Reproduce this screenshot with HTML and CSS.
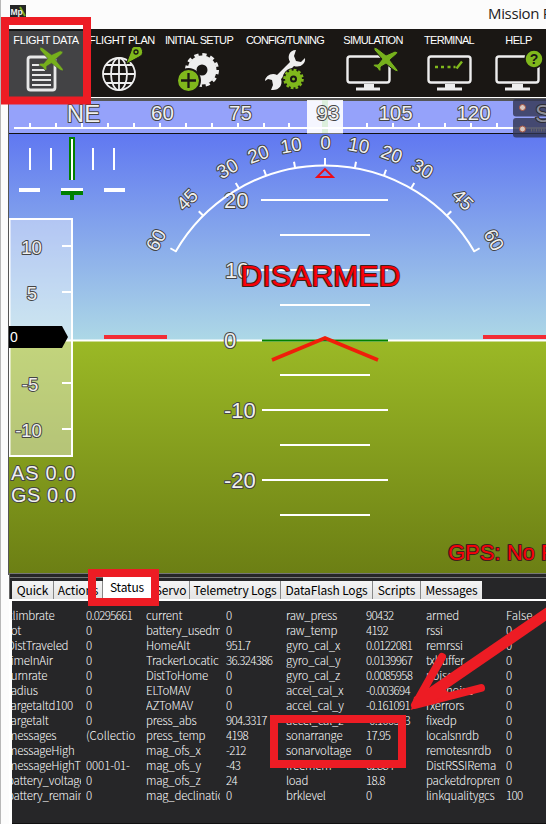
FILE: index.html
```html
<!DOCTYPE html>
<html lang="en">
<head>
<meta charset="utf-8">
<title>Mission Planner</title>
<link rel="stylesheet" href="styles.css">
</head>
<body>
<svg class="defs" width="0" height="0">
  <symbol id="plane" viewBox="0 0 26 26" overflow="visible">
    <path d="M1 0 L4 1 L13 8 L22 4 L25 5 L24 7 L17 13 L25 23 L25 25 L22 24 L13 17 L8 20 L8 24 L6 24 L4 21 L0 19 L1 17 L5 17 L9 12 L1 3 Z"/>
  </symbol>
</svg>
<div class="window">
  <header class="titlebar">
    <svg class="app-icon" width="16" height="13" viewBox="0 0 16 13"><rect width="16" height="13" fill="#262626"/><path d="M10 2l5 9" stroke="#78a81f" stroke-width="2"/><text x="0.500" y="10" class="mp">Mp</text></svg>
    <h1>Mission Planner</h1>
  </header>
  <nav class="toolbar">
    <a class="tool active w-data"><span>FLIGHT DATA</span>
      <svg width="74" height="50" viewBox="9 47 74 50">
        <rect x="28" y="57" width="27" height="33" rx="2.500" fill="none" stroke="#e8e8e8" stroke-width="2.800"/>
        <path d="M32 65h8M32 70h13M32 75h19M32 80h19M32 85h19" stroke="#e8e8e8" stroke-width="2"/>
        <use href="#plane" x="39" y="47" width="25" height="25" fill="#76b01c" stroke="#444" stroke-width=".6"/>
      </svg></a>
    <a class="tool w-plan"><span>FLIGHT PLAN</span>
      <svg width="78" height="50" viewBox="83 47 78 50">
        <g fill="none" stroke="#eee" stroke-width="1.800"><circle cx="119" cy="74" r="16"/><ellipse cx="119" cy="74" rx="8" ry="16"/><path d="M119 58v32M103 74h32M106 65h26M106 83h26"/></g>
        <path d="M126 64 L131 51 A5.800 5.800 0 1 1 139 57 Z" fill="#80b81c" stroke="#1a1714"/><circle cx="136" cy="52" r="2" fill="#80b81c" stroke="#1a1714" stroke-width="1.300"/>
      </svg></a>
    <a class="tool w-setup"><span>INITIAL SETUP</span>
      <svg width="76" height="50" viewBox="161 47 76 50">
        <circle cx="202" cy="70" r="10" fill="none" stroke="#eee" stroke-width="9"/><circle cx="202" cy="70" r="15.500" fill="none" stroke="#eee" stroke-width="3" stroke-dasharray="4.300 3.800"/>
        <circle cx="188.500" cy="80.500" r="11.500" fill="#80b81c" stroke="#1a1714" stroke-width="2"/><path d="M181 80.500h15M188.500 73v15" stroke="#1a1714" stroke-width="2.300"/>
      </svg></a>
    <a class="tool w-config"><span>CONFIG/TUNING</span>
      <svg width="96" height="50" viewBox="237 47 96 50">
        <path d="M296 50 C289 50 287 57 290 62 L277 75 C272 72 265 76 265 81 L268 79 L272 80 L273 85 L271 90 C279 91 283 85 281 79 L294 66 C300 68 306 64 305 58 L301 62 L296 61 L294 56 Z" fill="#eee"/>
        <circle cx="293.500" cy="79" r="11" fill="#1a1714"/><circle cx="293.500" cy="79" r="6" fill="none" stroke="#80b81c" stroke-width="5"/><circle cx="293.500" cy="79" r="9" fill="none" stroke="#80b81c" stroke-width="2.500" stroke-dasharray="2.700 2"/><circle cx="293.500" cy="79" r="1.500" fill="#80b81c"/>
      </svg></a>
    <a class="tool w-sim"><span>SIMULATION</span>
      <svg width="80" height="50" viewBox="333 47 80 50">
        <rect x="347.500" y="56.500" width="42" height="26" rx="2.500" fill="none" stroke="#eee" stroke-width="2.400"/><path d="M364 84h10v3.500h6v3h-24v-3h8z" fill="#eee"/>
        <use href="#plane" x="373" y="47" width="26" height="26" fill="#76b01c" stroke="#1a1714" stroke-width="1"/>
      </svg></a>
    <a class="tool w-term"><span>TERMINAL</span>
      <svg width="72" height="50" viewBox="413 47 72 50">
        <rect x="428.500" y="56.500" width="42" height="26" rx="2.500" fill="none" stroke="#eee" stroke-width="2.400"/><path d="M445 84h10v3.500h7v3h-25v-3h8z" fill="#eee"/>
        <path d="M435 67h3M441 67h3M447.500 67h3M453.500 67h2M456.500 68.500l5.500-7" stroke="#80b81c" stroke-width="2.400"/>
      </svg></a>
    <a class="tool w-help"><span>HELP</span>
      <svg width="61" height="50" viewBox="485 47 61 50">
        <rect x="496.500" y="56.500" width="42" height="26" rx="2.500" fill="none" stroke="#eee" stroke-width="2.400"/><path d="M512 84h11v3.500h7v3h-25v-3h7z" fill="#eee"/>
        <circle cx="534" cy="59" r="9" fill="#80b81c" stroke="#1a1714" stroke-width="1.500"/><text x="534" y="64" class="qmark">?</text>
      </svg></a>
  </nav>
  <svg class="hud" width="537" height="475" viewBox="9 99 537 475">
    <defs>
      <linearGradient id="sky" x1="0" y1="0" x2="0" y2="1"><stop offset="0" stop-color="#6078f1"/><stop offset="1" stop-color="#add8e6"/></linearGradient>
      <linearGradient id="ground" x1="0" y1="0" x2="0" y2="1"><stop offset="0" stop-color="#9bb926"/><stop offset="1" stop-color="#6c7f14"/></linearGradient>
    </defs>
    <rect x="9" y="134" width="537" height="206" fill="url(#sky)"/>
    <rect x="9" y="340" width="537" height="233" fill="url(#ground)"/>
    <path d="M9 340.500H546" stroke="#fff" stroke-width="2"/>

    <rect x="9" y="99" width="537" height="34" fill="#95a2fa"/>
    <path d="M9 100H546" stroke="#555" stroke-width="2"/>
    <rect x="307" y="100" width="36" height="33" fill="#fff" opacity=".9"/>
    <rect x="322" y="100" width="6" height="33" fill="#dcefdc"/>
    <path d="M14 128H546" stroke="#fff" stroke-width="2"/>
    <path d="M30 123v5M56 123v5M82 123v5M108 123v5M134 123v5M160 123v5M186 123v5M212 123v5M238 123v5M264 123v5M289 123v5M367 123v5M393 123v5M419 123v5M445 123v5M471 123v5M497 123v5" stroke="#fff" stroke-width="2"/>
    <path d="M9 133.500H307M343 133.500H546" stroke="#111" stroke-width="1.200"/>
    <g class="num mid s21">
      <text x="83.500" y="122" class="s24">NE</text><text x="162.500" y="120">60</text><text x="240.500" y="120">75</text><text x="328" y="120">93</text><text x="395.500" y="120">105</text><text x="473.500" y="120">120</text>
    </g>
    <g class="chip"><rect x="513" y="99" width="40" height="17.500" rx="3"/><rect x="513" y="118" width="40" height="19.500" rx="3"/></g>
    <text x="543" y="122" class="heading-dim">S</text>
    <g fill="#d8c8c0" stroke="#a6523e"><circle cx="522.500" cy="107.500" r="3"/><circle cx="522.500" cy="129" r="3"/></g>
    <path d="M531 130h15" stroke="#666" stroke-width="3" stroke-dasharray="1 1.500"/>

    <path d="M30 148v22M51 148v22M93 148v22M114 148v22" stroke="#fff" stroke-width="2"/>
    <path d="M72 137v43" stroke="#008000" stroke-width="6"/><path d="M72 139v41" stroke="#fff" stroke-width="2"/>
    <path d="M72 193v7" stroke="#008000" stroke-width="4"/>
    <path d="M19 190h21M61 190h22M104 190h21" stroke="#fff" stroke-width="4"/><path d="M61 193h22" stroke="#008000" stroke-width="4"/>

    <rect x="9" y="219" width="63" height="237" fill="#fff" opacity=".4"/>
    <path d="M9.500 219H72V456H9.500Z" fill="none" stroke="#fff" stroke-width="2"/>
    <path d="M62 246h10M62 292h10M62 383h10M62 429h10" stroke="#fff" stroke-width="2"/>
    <g class="num mid s18"><text x="31.500" y="254">10</text><text x="32" y="300">5</text><text x="30" y="391">-5</text><text x="28.500" y="437">-10</text></g>
    <path d="M9 326H62L68 337L62 348H9Z" fill="#000"/><text x="10" y="342" class="speed">0</text>
    <g class="num s20"><text x="11" y="480" textLength="64">AS 0.0</text><text x="11" y="502" textLength="65">GS 0.0</text></g>

    <g stroke="#fff" stroke-width="2"><path d="M261 200H388M280 235H370M261 270H388M280 305H370M280 375H370M262 410H388M280 445H370M262 480H388M280 515H370"/></g>
    <path d="M262 340.500H388" stroke="#008000" stroke-width="2"/>
    <path d="M104 337H167M483 337H546" stroke="#f22d35" stroke-width="4"/>
    <path d="M272 360L325 338L378 360" fill="none" stroke="#f01e0a" stroke-width="3.600"/>
    <g class="num s22"><text x="224" y="208">20</text><text x="225" y="278">10</text><text x="224" y="348">0</text><text x="224" y="418">-10</text><text x="224" y="488">-20</text></g>

    <path d="M175.700 251.500A172.500 172.500 0 0 1 474.300 251.500" fill="none" stroke="#fff" stroke-width="2"/>
    <g stroke="#fff" stroke-width="2">
      <path d="M325 165v-7"/><path d="M325 165v-6" transform="rotate(10 325 337.500)"/><path d="M325 165v-6" transform="rotate(20 325 337.500)"/><path d="M325 165v-6" transform="rotate(30 325 337.500)"/><path d="M325 165v-6" transform="rotate(45 325 337.500)"/><path d="M325 166v-7" transform="rotate(60 325 337.500)"/>
      <path d="M325 165v-6" transform="rotate(-10 325 337.500)"/><path d="M325 165v-6" transform="rotate(-20 325 337.500)"/><path d="M325 165v-6" transform="rotate(-30 325 337.500)"/><path d="M325 165v-6" transform="rotate(-45 325 337.500)"/><path d="M325 166v-7" transform="rotate(-60 325 337.500)"/>
    </g>
    <g class="num mid s19">
      <text x="325.500" y="149">0</text>
      <text x="325" y="149" transform="rotate(10 325 337.500)">10</text><text x="325" y="149" transform="rotate(20 325 337.500)">20</text><text x="325" y="149" transform="rotate(30 325 337.500)">30</text><text x="325" y="149" transform="rotate(45 325 337.500)">45</text><text x="325" y="149" transform="rotate(60 325 337.500)">60</text>
      <text x="325" y="149" transform="rotate(-10 325 337.500)">10</text><text x="325" y="149" transform="rotate(-20 325 337.500)">20</text><text x="325" y="149" transform="rotate(-30 325 337.500)">30</text><text x="325" y="149" transform="rotate(-45 325 337.500)">45</text><text x="325" y="149" transform="rotate(-60 325 337.500)">60</text>
    </g>
    <path d="M325 169L317 177H333Z" fill="none" stroke="#f00a14" stroke-width="1.800"/>
    <text x="240.500" y="286" class="warn s30" textLength="160">DISARMED</text>
    <text x="448" y="560" class="warn s22">GPS: No Fix</text>
  </svg>
  <div class="tabs">
    <span class="tab t1">Quick</span><span class="tab t2">Actions</span><span class="tab t3 selected">Status</span><span class="tab t4">Servo</span><span class="tab t5">Telemetry Logs</span><span class="tab t6">DataFlash Logs</span><span class="tab t7">Scripts</span><span class="tab t8">Messages</span>
  </div>
  <main class="status">
    <div class="names first"><b>climbrate</b><b>rot</b><b>DistTraveled</b><b>timeInAir</b><b>turnrate</b><b>radius</b><b>targetaltd100</b><b>targetalt</b><b>messages</b><b>messageHigh</b><b>messageHighT</b><b>battery_voltage</b><b>battery_remain</b></div>
    <div class="values"><b>0.0295661</b><b>0</b><b>0</b><b>0</b><b>0</b><b>0</b><b>0</b><b>0</b><b class="words">(Collectio</b><b></b><b class="date">0001-01-</b><b>0</b><b>0</b></div>
    <div class="names"><b>current</b><b>battery_usedm</b><b>HomeAlt</b><b>TrackerLocatic</b><b>DistToHome</b><b>ELToMAV</b><b>AZToMAV</b><b>press_abs</b><b>press_temp</b><b>mag_ofs_x</b><b>mag_ofs_y</b><b>mag_ofs_z</b><b>mag_declinatio</b></div>
    <div class="values"><b>0</b><b>0</b><b>951.7</b><b>36.324386</b><b>0</b><b>0</b><b>0</b><b>904.3317</b><b>4198</b><b>-212</b><b>-43</b><b>24</b><b>0</b></div>
    <div class="names"><b>raw_press</b><b>raw_temp</b><b>gyro_cal_x</b><b>gyro_cal_y</b><b>gyro_cal_z</b><b>accel_cal_x</b><b>accel_cal_y</b><b>accel_cal_z</b><b>sonarrange</b><b>sonarvoltage</b><b>freemem</b><b>load</b><b>brklevel</b></div>
    <div class="values"><b>90432</b><b>4192</b><b>0.0122081</b><b>0.0139967</b><b>0.0085958</b><b>-0.003694</b><b>-0.161091</b><b>-0.100393</b><b>17.95</b><b>0</b><b>62884</b><b>18.8</b><b>0</b></div>
    <div class="names"><b>armed</b><b>rssi</b><b>remrssi</b><b>txbuffer</b><b>noise</b><b>remnoise</b><b>rxerrors</b><b>fixedp</b><b>localsnrdb</b><b>remotesnrdb</b><b>DistRSSIRema</b><b>packetdroprem</b><b>linkqualitygcs</b></div>
    <div class="values last"><b class="words">False</b><b>0</b><b>0</b><b>0</b><b>0</b><b>0</b><b>0</b><b>0</b><b>0</b><b>0</b><b>0</b><b>0</b><b>100</b></div>
  </main>
</div>
<svg class="marks" width="546" height="824" viewBox="0 0 546 824">
  <g fill="none" stroke="#ed1c24">
    <path d="M5 21H87V100.500H5Z" stroke-width="8"/>
    <path d="M92 573H155V602H92Z" stroke-width="8"/>
    <path d="M274 719H402V764H274Z" stroke-width="8"/>
    <path d="M418 702L552 610" stroke-width="11"/>
    <path d="M442 657L415 705L481 688" stroke-width="8" stroke-linecap="round" stroke-linejoin="round"/>
  </g>
  <path d="M411 710L414 697L440 684L450 694Z" fill="#ed1c24"/>
</svg>
</body>
</html>
```
FILE: styles.css
```css
* { box-sizing: border-box; }
body { margin: 0; width: 546px; height: 824px; overflow: hidden; position: relative; background: #fcfcfc; font-family: "Liberation Sans", sans-serif; }
.defs { position: absolute; }
.window { height: 824px; border-left: 1px solid #b8b8b8; padding-left: 8px; display: flex; flex-direction: column; overflow: hidden; }

.titlebar { height: 29px; flex: none; display: flex; justify-content: space-between; align-items: flex-start; padding: 5px 0 0 1px; }
.titlebar h1 { margin: -3px 0 0; width: 58px; font: 15px/22px "Open Sans", sans-serif; letter-spacing: -.35px; color: #222; white-space: nowrap; overflow: hidden; }
.mp { font: bold 8.5px "Liberation Sans", sans-serif; fill: #eee; }

.toolbar { height: 70px; flex: none; display: flex; background: #1a1714; border-bottom: 2px solid #fff; overflow: hidden; }
.tool { flex: none; display: flex; flex-direction: column; align-items: center; color: #fff; font-size: 11px; line-height: 18px; padding-top: 2px; height: 68px; }
.tool span { height: 16px; white-space: nowrap; }
.tool svg { display: block; flex: none; }
.tool.active { background: #434345; border-top: 2px solid #151515; padding-top: 0; }
.w-data { width: 74px; letter-spacing: -.4px; }
.w-plan { width: 78px; letter-spacing: -.45px; }
.w-setup { width: 76px; letter-spacing: -.65px; }
.w-config { width: 96px; letter-spacing: -.75px; }
.w-sim { width: 80px; letter-spacing: -.7px; }
.w-term { width: 72px; letter-spacing: -.7px; }
.w-help { width: 61px; letter-spacing: -.6px; }
.w-help span { margin-left: 6px; }
.qmark { font: bold 14px "Liberation Sans", sans-serif; text-anchor: middle; fill: #1a1714; letter-spacing: 0; }

.hud { display: block; flex: none; background: #777; outline: 1px solid #555; }
.num { fill: #f0f0f0; stroke: #444; stroke-width: 2px; paint-order: stroke; stroke-linejoin: round; }
.mid { text-anchor: middle; }
.s18 { font-size: 18.5px; }
.s19 { font-size: 19px; }
.s20 { font-size: 20px; }
.s21 { font-size: 20.5px; }
.s22 { font-size: 22px; }
.s24 { font-size: 24px; }
.s30 { font-size: 30px; }
.warn { fill: #f80008; stroke: #40201c; stroke-width: 2px; paint-order: stroke; stroke-linejoin: round; }
.heading-dim { font-size: 24px; text-anchor: middle; fill: #8f8f98; stroke: #2c2c34; stroke-width: 2px; paint-order: stroke; }
.speed { font-size: 14px; fill: #fff; }
.chip { fill: #30344f; opacity: .8; }

.tabs { height: 25px; flex: none; display: flex; align-items: flex-end; background: linear-gradient(#262628 3px, #777 3px, #777 4px, #262628 4px); border-left: 1px solid #666; padding-left: 2px; font: 12px/18px "Noto Sans CJK JP", sans-serif; letter-spacing: -.15px; color: #000; }
.tab { height: 18px; flex: none; background: linear-gradient(#f4f4f4, #e4e4e4); border-right: 1px solid #888; text-align: center; white-space: nowrap; overflow: hidden; }
.tab.selected { height: 22px; background: #fff; line-height: 20px; }
.t1 { width: 42px; }
.t2 { width: 49px; }
.t3 { width: 49px; }
.t4 { width: 38px; }
.t5 { width: 91px; }
.t6 { width: 92px; }
.t7 { width: 48px; }
.t8 { width: 61px; border: 0; }

.status { flex: 1; display: grid; grid-template-columns: 74px 60px 80px 60px 80px 60px 80px 40px; border-left: 3px solid #fff; border-top: 2px solid #fff; background: #262628; padding-top: 7px; color: #fff; font: 11.5px/15px "Noto Sans CJK JP", sans-serif; overflow: hidden; box-shadow: inset 0 -1px #111; }
.status b { display: block; height: 15px; font-weight: 300; white-space: nowrap; }
.names, .values { overflow: hidden; }
.names { width: 74px; letter-spacing: -.2px; }
.first { width: 69px; }
.first b { margin-left: -5px; }
.values { letter-spacing: -.65px; width: 50px; }
.values.last { width: 40px; }
.values .words { letter-spacing: 0; }
.values .date { letter-spacing: -.1px; }

.marks { position: absolute; left: 0; top: 0; }
```
